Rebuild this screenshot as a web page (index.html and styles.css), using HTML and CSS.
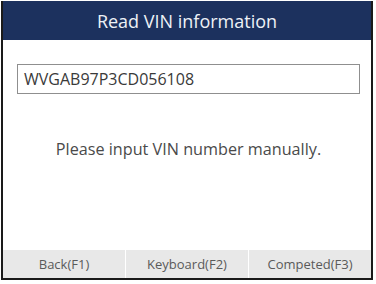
FILE: index.html
```html
<!DOCTYPE html>
<html lang="en">
<head>
    <meta charset="UTF-8">
    <meta name="viewport" content="width=device-width, initial-scale=1.0">
    <title>Read VIN information</title>
    <link rel="stylesheet" href="styles.css">
</head>
<body>
    <div class="screen">
        <div class="header">
            <h1>Read VIN information</h1>
        </div>

        <div class="content">
            <div class="vin-input">WVGAB97P3CD056108</div>
            <p class="message">Please input VIN number manually.</p>
        </div>

        <div class="footer">
            <button class="fkey">Back(F1)</button>
            <button class="fkey">Keyboard(F2)</button>
            <button class="fkey">Competed(F3)</button>
        </div>
    </div>
</body>
</html>
```

FILE: styles.css
```css
* {
    margin: 0;
    padding: 0;
    box-sizing: border-box;
}

body {
    font-family: 'Open Sans', 'Noto Sans', sans-serif;
    background: #ffffff;
    padding: 1px 0 0 1px;
}

.screen {
    width: 372px;
    height: 279px;
    border: 2px solid #1a1a1a;
    border-top: none;
    display: flex;
    flex-direction: column;
    background: #ffffff;
}

.header {
    height: 39px;
    background: #1c315e;
    display: flex;
    align-items: center;
    justify-content: center;
}

.header h1 {
    color: #eef1f6;
    font-size: 18px;
    font-weight: 400;
}

.content {
    flex: 1;
    padding: 24px 11px 0 14px;
}

.vin-input {
    height: 30px;
    border: 1px solid #8f8f8f;
    padding-left: 6px;
    display: flex;
    align-items: center;
    font-size: 16px;
    color: #3a3a3a;
}

.message {
    margin-top: 44px;
    text-align: center;
    font-size: 16.2px;
    color: #4a4a4a;
}

.footer {
    height: 28px;
    display: flex;
    background: #e8e8e8;
}

.fkey {
    flex: 1;
    border: none;
    border-left: 1px solid #ffffff;
    background: transparent;
    font-family: inherit;
    font-size: 13px;
    color: #5a5a5a;
}

.fkey:first-child {
    border-left: none;
}
```
